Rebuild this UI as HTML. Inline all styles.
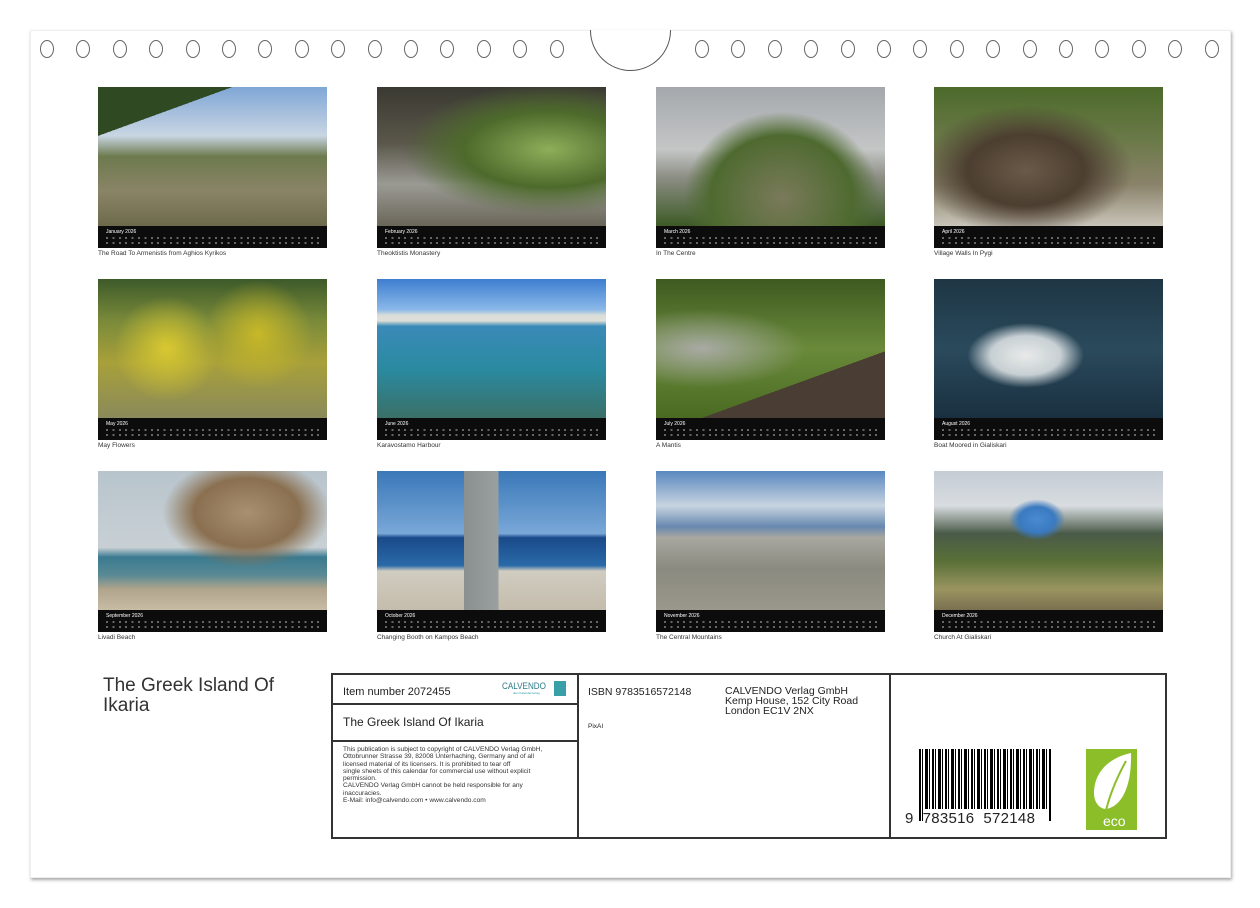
<!DOCTYPE html>
<html><head><meta charset="utf-8">
<style>
*{margin:0;padding:0;box-sizing:border-box}
body{width:1260px;height:908px;background:#fff;position:relative;overflow:hidden;font-family:"Liberation Sans",sans-serif;color:#222}
.sheet{position:absolute;left:30px;top:30px;width:1201px;height:848px;background:#fff;box-shadow:1px 2px 3px rgba(0,0,0,.35);border:1px solid #eee}
.ring{position:absolute;width:14px;height:18px;border:1.5px solid #666;border-radius:50%;top:40px;background:#fff}
.half{position:absolute;left:590px;top:30px;width:81px;height:41px;border:1.6px solid #555;border-top:none;border-radius:0 0 41px 41px;background:#fff}
.ph{position:absolute;width:229px;height:139px}
.strip{position:absolute;width:229px;height:22px;background:#0c0c0c}
.strip b{position:absolute;left:8px;top:3px;font-size:5px;color:#fff;font-weight:normal}
.strip i{position:absolute;left:8px;right:8px;height:2px;background:repeating-linear-gradient(90deg,#666 0 2px,transparent 2px 6.4px)}
.cap{position:absolute;font-size:6.5px;color:#333;white-space:nowrap}
.box{position:absolute;left:331px;top:673px;width:836px;height:166px;border:2px solid #333}
.v{position:absolute;top:0;bottom:0;width:2px;background:#333}
.h{position:absolute;left:0;width:246px;height:2px;background:#333}
.t{position:absolute;white-space:nowrap}
</style></head><body>
<div class="sheet"></div>
<div id="rings"></div>
<div class="half"></div>
<script>
var r=document.getElementById('rings'),s='';
for(var i=0;i<15;i++){s+='<div class="ring" style="left:'+(40+i*36.4)+'px"></div>';s+='<div class="ring" style="left:'+(695+i*36.4)+'px"></div>';}
r.innerHTML=s;
</script>

<!-- Row 1 -->
<div class="ph" style="left:98px;top:87px;background:linear-gradient(160deg,#2f4a22 0 22%,transparent 22%),linear-gradient(180deg,#7fa6d6 0,#c9d6e3 35%,#6d7a4e 50%,#8a8466 75%,#6d6a4c 100%)"></div>
<div class="ph" style="left:377px;top:87px;background:radial-gradient(ellipse at 75% 45%,#8fae5a 0,#4d6a2b 35%,transparent 60%),linear-gradient(180deg,#3a3a32 0,#5a564a 40%,#9a9a94 70%,#6a6658 100%)"></div>
<div class="ph" style="left:656px;top:87px;background:radial-gradient(ellipse at 55% 80%,#7a7a5a 0,#4e6a30 40%,transparent 55%),linear-gradient(180deg,#a4a8ac 0,#c4c6c6 45%,#8c8e84 65%,#3d5a26 100%)"></div>
<div class="ph" style="left:934px;top:87px;background:radial-gradient(ellipse at 40% 60%,#6a5a48 0,#4c3e30 30%,transparent 55%),linear-gradient(180deg,#4c6a2a 0,#6c7a4a 40%,#8a826a 70%,#c8c4b8 100%)"></div>
<div class="strip" style="left:98px;top:226px"><b>January 2026</b><i style="top:11px"></i><i style="top:16px"></i></div>
<div class="strip" style="left:377px;top:226px"><b>February 2026</b><i style="top:11px"></i><i style="top:16px"></i></div>
<div class="strip" style="left:656px;top:226px"><b>March 2026</b><i style="top:11px"></i><i style="top:16px"></i></div>
<div class="strip" style="left:934px;top:226px"><b>April 2026</b><i style="top:11px"></i><i style="top:16px"></i></div>
<div class="cap" style="left:98px;top:250px">The Road To Armenistis from Aghios Kyrikos</div>
<div class="cap" style="left:377px;top:250px">Theoktistis Monastery</div>
<div class="cap" style="left:656px;top:250px">In The Centre</div>
<div class="cap" style="left:934px;top:250px">Village Walls In Pygi</div>

<!-- Row 2 -->
<div class="ph" style="left:98px;top:279px;background:radial-gradient(circle at 30% 50%,#d8c830 0,transparent 30%),radial-gradient(circle at 70% 40%,#c8b828 0,transparent 30%),linear-gradient(180deg,#3d5a2a 0,#7a8a3a 30%,#a8a03a 60%,#8a8a5a 100%)"></div>
<div class="ph" style="left:377px;top:279px;background:linear-gradient(180deg,#3e7ed0 0,#8ab8e8 22%,#d8dcd8 26%,#e0e0d8 30%,#3a8ab8 34%,#2a8aa0 65%,#3a7068 100%)"></div>
<div class="ph" style="left:656px;top:279px;background:linear-gradient(160deg,transparent 70%,#4a3e34 70%),radial-gradient(ellipse at 20% 50%,#a8aaa4 0,transparent 40%),linear-gradient(180deg,#3e5a20 0,#6a8a3a 50%,#4a6a22 100%)"></div>
<div class="ph" style="left:934px;top:279px;background:radial-gradient(ellipse at 40% 55%,#e8eae8 0,#c8d0d4 18%,transparent 30%),linear-gradient(180deg,#1e3644 0,#2a4a5c 50%,#1a3040 100%)"></div>
<div class="strip" style="left:98px;top:418px"><b>May 2026</b><i style="top:11px"></i><i style="top:16px"></i></div>
<div class="strip" style="left:377px;top:418px"><b>June 2026</b><i style="top:11px"></i><i style="top:16px"></i></div>
<div class="strip" style="left:656px;top:418px"><b>July 2026</b><i style="top:11px"></i><i style="top:16px"></i></div>
<div class="strip" style="left:934px;top:418px"><b>August 2026</b><i style="top:11px"></i><i style="top:16px"></i></div>
<div class="cap" style="left:98px;top:442px">May Flowers</div>
<div class="cap" style="left:377px;top:442px">Karavostamo Harbour</div>
<div class="cap" style="left:656px;top:442px">A Mantis</div>
<div class="cap" style="left:934px;top:442px">Boat Moored in Gialiskari</div>

<!-- Row 3 -->
<div class="ph" style="left:98px;top:471px;background:radial-gradient(ellipse at 65% 30%,#a89070 0,#8a7050 25%,transparent 40%),linear-gradient(180deg,#b8c4cc 0,#c8d0d4 55%,#3a7a90 62%,#5a8a94 75%,#b0a48c 85%,#c8bca4 100%)"></div>
<div class="ph" style="left:377px;top:471px;background:linear-gradient(90deg,transparent 38%,#8a9090 38%,#9aa0a0 53%,transparent 53%),linear-gradient(180deg,#3a78b8 0,#7aa8d8 45%,#1a4a8a 48%,#2a6aa8 68%,#d0ccc0 72%,#c4bcac 100%)"></div>
<div class="ph" style="left:656px;top:471px;background:linear-gradient(180deg,#5a88c0 0,#c8d4e0 25%,#6888b0 40%,#a8a8a0 48%,#8a8a80 70%,#9a988c 100%)"></div>
<div class="ph" style="left:934px;top:471px;background:radial-gradient(ellipse at 45% 35%,#4a8ad0 0,#3a7ac0 10%,transparent 16%),linear-gradient(180deg,#c4ccd4 0,#d8dce0 25%,#4a5a48 45%,#5a7038 65%,#9a9460 85%,#7a7050 100%)"></div>
<div class="strip" style="left:98px;top:610px"><b>September 2026</b><i style="top:11px"></i><i style="top:16px"></i></div>
<div class="strip" style="left:377px;top:610px"><b>October 2026</b><i style="top:11px"></i><i style="top:16px"></i></div>
<div class="strip" style="left:656px;top:610px"><b>November 2026</b><i style="top:11px"></i><i style="top:16px"></i></div>
<div class="strip" style="left:934px;top:610px"><b>December 2026</b><i style="top:11px"></i><i style="top:16px"></i></div>
<div class="cap" style="left:98px;top:634px">Livadi Beach</div>
<div class="cap" style="left:377px;top:634px">Changing Booth on Kampos Beach</div>
<div class="cap" style="left:656px;top:634px">The Central Mountains</div>
<div class="cap" style="left:934px;top:634px">Church At Gialiskari</div>

<div class="t" style="left:103px;top:676px;font-size:19px;line-height:20px;color:#333">The Greek Island Of<br>Ikaria</div>

<div class="box">
  <div class="v" style="left:244px"></div>
  <div class="v" style="left:556px"></div>
  <div class="h" style="top:28px"></div>
  <div class="h" style="top:65px"></div>
  <div class="t" style="left:10px;top:11px;font-size:11px">Item number 2072455</div>
  <div class="t" style="left:169px;top:6px;font-size:9px;color:#2a7a8a;transform:scaleX(.9);transform-origin:left">CALVENDO</div>
  <div class="t" style="left:180px;top:16px;font-size:3px;color:#2a9aa8">dein Kalenderverlag</div>
  <div style="position:absolute;left:221px;top:6px;width:12px;height:15px;background:#3aa0a8"></div>
  <div class="t" style="left:10px;top:40px;font-size:12px">The Greek Island Of Ikaria</div>
  <div class="t" style="left:10px;top:71px;font-size:6.6px;line-height:7.3px;color:#333">This publication is subject to copyright of CALVENDO Verlag GmbH,<br>Ottobrunner Strasse 39, 82008 Unterhaching, Germany and of all<br>licensed material of its licensers. It is prohibited to tear off<br>single sheets of this calendar for commercial use without explicit<br>permission.<br>CALVENDO Verlag GmbH cannot be held responsible for any<br>inaccuracies.<br>E-Mail: info@calvendo.com • www.calvendo.com</div>
  <div class="t" style="left:255px;top:11px;font-size:10.5px">ISBN 9783516572148</div>
  <div class="t" style="left:392px;top:11px;font-size:10.5px;line-height:10px">CALVENDO Verlag GmbH<br>Kemp House, 152 City Road<br>London EC1V 2NX</div>
  <div class="t" style="left:255px;top:48px;font-size:6.5px">PixAI</div>
  <div style="position:absolute;left:586px;top:74px;width:132px;height:72px;background:repeating-linear-gradient(90deg,#000 0 2px,#fff 2px 3px,#000 3px 4px,#fff 4px 6px,#000 6px 9px,#fff 9px 10px,#000 10px 11px,#fff 11px 13px)"></div>
  <div style="position:absolute;left:590px;top:134px;width:125px;height:14px;background:#fff"></div>
  <div class="t" style="left:572px;top:135px;font-size:15px;letter-spacing:.3px">9 &nbsp;783516 &nbsp;572148</div>
  <div style="position:absolute;left:753px;top:74px;width:51px;height:81px;background:#8cbe2a">
    <svg width="51" height="81" viewBox="0 0 51 81"><path d="M45 4 C25 8 8 22 8 44 C8 54 14 60 20 60 C34 58 46 40 45 4Z" fill="#fff"/><path d="M40 12 C30 30 22 50 18 70" stroke="#8cbe2a" stroke-width="2" fill="none"/><text x="17" y="77" font-size="14" fill="#fff" font-family="Liberation Sans,sans-serif">eco</text></svg>
  </div>
</div>
</body></html>
